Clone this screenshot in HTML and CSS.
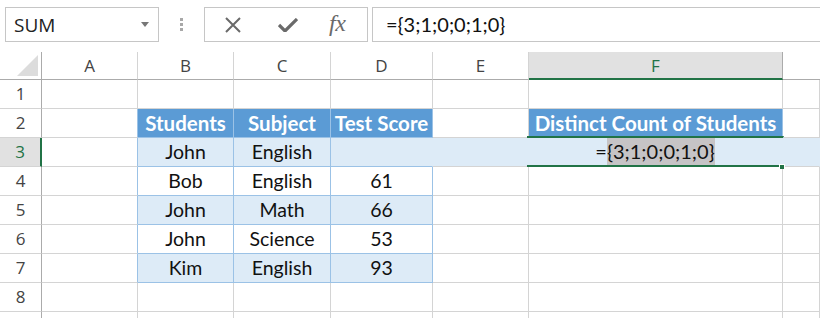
FILE: index.html
```html
<!DOCTYPE html>
<html lang="en">

<head>
    <meta charset="UTF-8">
    <meta name="viewport" content="width=device-width, initial-scale=1.0">
    <title>Distinct Count</title>
    <link rel="stylesheet" href="styles.css">
</head>

<body>
    <div class="toolbar">
        <div class="namebox">
            <span>SUM</span>
            <span class="arrow"></span>
        </div>
        <div class="dots"><i></i><i></i><i></i></div>
        <div class="fxbox">
            <svg class="icon" width="18" height="18" viewBox="0 0 18 18">
                <path d="M2 2 L16 16 M16 2 L2 16" stroke="#6a6a6a" stroke-width="2" fill="none" />
            </svg>
            <svg class="icon" width="20" height="14" viewBox="0 0 20 14">
                <path d="M1 7 L7 13 L19 1" stroke="#6a6a6a" stroke-width="3.2" fill="none" stroke-linejoin="miter" />
            </svg>
            <span class="fx">fx</span>
        </div>
        <div class="formula">={3;1;0;0;1;0}</div>
    </div>

    <div class="sheet">
        <!-- cabecera de columnas -->
        <div class="corner"></div>
        <div class="ch">A</div>
        <div class="ch">B</div>
        <div class="ch">C</div>
        <div class="ch">D</div>
        <div class="ch">E</div>
        <div class="ch sel">F</div>
        <div class="ch last"></div>

        <!-- fila 1 -->
        <div class="rh">1</div>
        <div class="c"></div>
        <div class="c"></div>
        <div class="c"></div>
        <div class="c"></div>
        <div class="c"></div>
        <div class="c"></div>
        <div class="c"></div>

        <!-- fila 2 -->
        <div class="rh">2</div>
        <div class="c tl"></div>
        <div class="c th">Students</div>
        <div class="c th">Subject</div>
        <div class="c th">Test Score</div>
        <div class="c"></div>
        <div class="c th">Distinct Count of Students</div>
        <div class="c"></div>

        <!-- fila 3 -->
        <div class="rh active">3</div>
        <div class="c tl"></div>
        <div class="c t band">John</div>
        <div class="c t band">English</div>
        <div class="c t band open"></div>
        <div class="c band open"></div>
        <div class="c band editing">=<span class="hl">{3;1;0;0;1;0}</span><span class="handle"></span></div>
        <div class="c band open"></div>

        <!-- fila 4 -->
        <div class="rh">4</div>
        <div class="c tl"></div>
        <div class="c t">Bob</div>
        <div class="c t">English</div>
        <div class="c t">61</div>
        <div class="c"></div>
        <div class="c"></div>
        <div class="c"></div>

        <!-- fila 5 -->
        <div class="rh">5</div>
        <div class="c tl"></div>
        <div class="c t band">John</div>
        <div class="c t band">Math</div>
        <div class="c t band">66</div>
        <div class="c"></div>
        <div class="c"></div>
        <div class="c"></div>

        <!-- fila 6 -->
        <div class="rh">6</div>
        <div class="c tl"></div>
        <div class="c t">John</div>
        <div class="c t">Science</div>
        <div class="c t">53</div>
        <div class="c"></div>
        <div class="c"></div>
        <div class="c"></div>

        <!-- fila 7 -->
        <div class="rh">7</div>
        <div class="c tl"></div>
        <div class="c t band">Kim</div>
        <div class="c t band">English</div>
        <div class="c t band">93</div>
        <div class="c"></div>
        <div class="c"></div>
        <div class="c"></div>

        <!-- fila 8 -->
        <div class="rh">8</div>
        <div class="c"></div>
        <div class="c"></div>
        <div class="c"></div>
        <div class="c"></div>
        <div class="c"></div>
        <div class="c"></div>
        <div class="c"></div>

        <!-- fila 9, solo asoma el borde -->
        <div class="rh"></div>
        <div class="c"></div>
        <div class="c"></div>
        <div class="c"></div>
        <div class="c"></div>
        <div class="c"></div>
        <div class="c"></div>
        <div class="c"></div>
    </div>
</body>

</html>
```

FILE: styles.css
```css
* {
    margin: 0;
    padding: 0;
    box-sizing: border-box;
}

body {
    background-color: #fff;
    width: 820px;
    height: 318px;
    overflow: hidden;
    font-family: Lato, "Liberation Sans", sans-serif;
}

/* barra de formulas */
.toolbar {
    display: flex;
    align-items: flex-start;
    height: 52px;
    padding-top: 7px;
}

.namebox {
    display: flex;
    align-items: center;
    justify-content: space-between;
    width: 154px;
    height: 35px;
    margin-left: 5px;
    padding: 0 9px 0 8px;
    border: 1px solid #c6c6c6;
    font-family: "Open Sans", sans-serif;
    font-size: 19px;
    color: #222;
}

.arrow {
    width: 0;
    height: 0;
    border-left: 4px solid transparent;
    border-right: 4px solid transparent;
    border-top: 5px solid #777;
}

.dots {
    display: flex;
    flex-direction: column;
    align-items: center;
    gap: 2px;
    width: 45px;
    padding-top: 11px;
}

.dots i {
    display: block;
    width: 3px;
    height: 3px;
    background-color: #a8a8a8;
}

.fxbox {
    display: flex;
    align-items: center;
    width: 164px;
    height: 35px;
    border: 1px solid #c6c6c6;
    padding-left: 19px;
}

.fxbox .icon {
    margin-right: 36px;
}

.fx {
    font-family: "Liberation Serif", serif;
    font-style: italic;
    font-size: 24px;
    color: #6a6a6a;
    letter-spacing: -0.5px;
    margin-left: -5px;
    margin-top: -2px;
}

.formula {
    flex: 1;
    height: 35px;
    margin-left: 4px;
    border: 1px solid #c6c6c6;
    border-right: none;
    padding-left: 13px;
    line-height: 33px;
    font-size: 20px;
    color: #111;
}

/* hoja */
.sheet {
    display: grid;
    grid-template-columns: 42px 96px 96px 97px 102px 96px 254px 1fr;
    grid-template-rows: 28px repeat(9, 29px);
    font-size: 19.5px;
    color: #111;
}

.corner {
    border-right: 1px solid #ababab;
    border-bottom: 1px solid #ababab;
    position: relative;
}

.corner::after {
    content: "";
    position: absolute;
    right: 3px;
    bottom: 3px;
    width: 21px;
    height: 21px;
    background-color: #dcdcdc;
    clip-path: polygon(100% 0, 100% 100%, 0 100%);
}

.ch {
    border-right: 1px solid #d4d4d4;
    border-bottom: 1px solid #ababab;
    text-align: center;
    line-height: 28px;
    font-family: "Open Sans", sans-serif;
    font-size: 17px;
    color: #444;
}

.ch.sel {
    background-color: #e1e1e1;
    border-right-color: #ababab;
    border-bottom: 2px solid #217346;
    color: #217346;
}

.ch.last {
    border-right: none;
}

.rh {
    border-right: 1px solid #ababab;
    border-bottom: 1px solid #d4d4d4;
    text-align: center;
    line-height: 28px;
    font-family: "Open Sans", sans-serif;
    font-size: 17px;
    color: #444;
}

.rh.active {
    background-color: #e1e1e1;
    border-right: 2px solid #217346;
    color: #217346;
}

.c {
    border-right: 1px solid #d4d4d4;
    border-bottom: 1px solid #d4d4d4;
    text-align: center;
    line-height: 28px;
    white-space: nowrap;
}

.tl {
    border-right-color: #9bc2e6;
}

.t {
    border-right-color: #9bc2e6;
    border-bottom-color: #9bc2e6;
}

.th {
    background-color: #5b9bd5;
    border-right-color: #9bc2e6;
    border-bottom-color: #9bc2e6;
    color: #fff;
    font-weight: bold;
    font-size: 20.5px;
}

.band {
    background-color: #ddebf7;
}

.open {
    border-right-color: transparent;
}

/* celda en edicion */
.editing {
    position: relative;
    border-right-color: transparent;
    border-top: 2px solid #217346;
    border-bottom: 2px solid #217346;
    margin: -2px -1px 0 -2px;
    line-height: 27px;
    font-size: 20px;
}

.hl {
    display: inline-block;
    background-color: #c6c4c6;
    line-height: 27px;
}

.handle {
    position: absolute;
    right: -2px;
    bottom: -4px;
    width: 6px;
    height: 5px;
    background-color: #217346;
    border: 1px solid #fff;
    border-bottom: none;
}
```
